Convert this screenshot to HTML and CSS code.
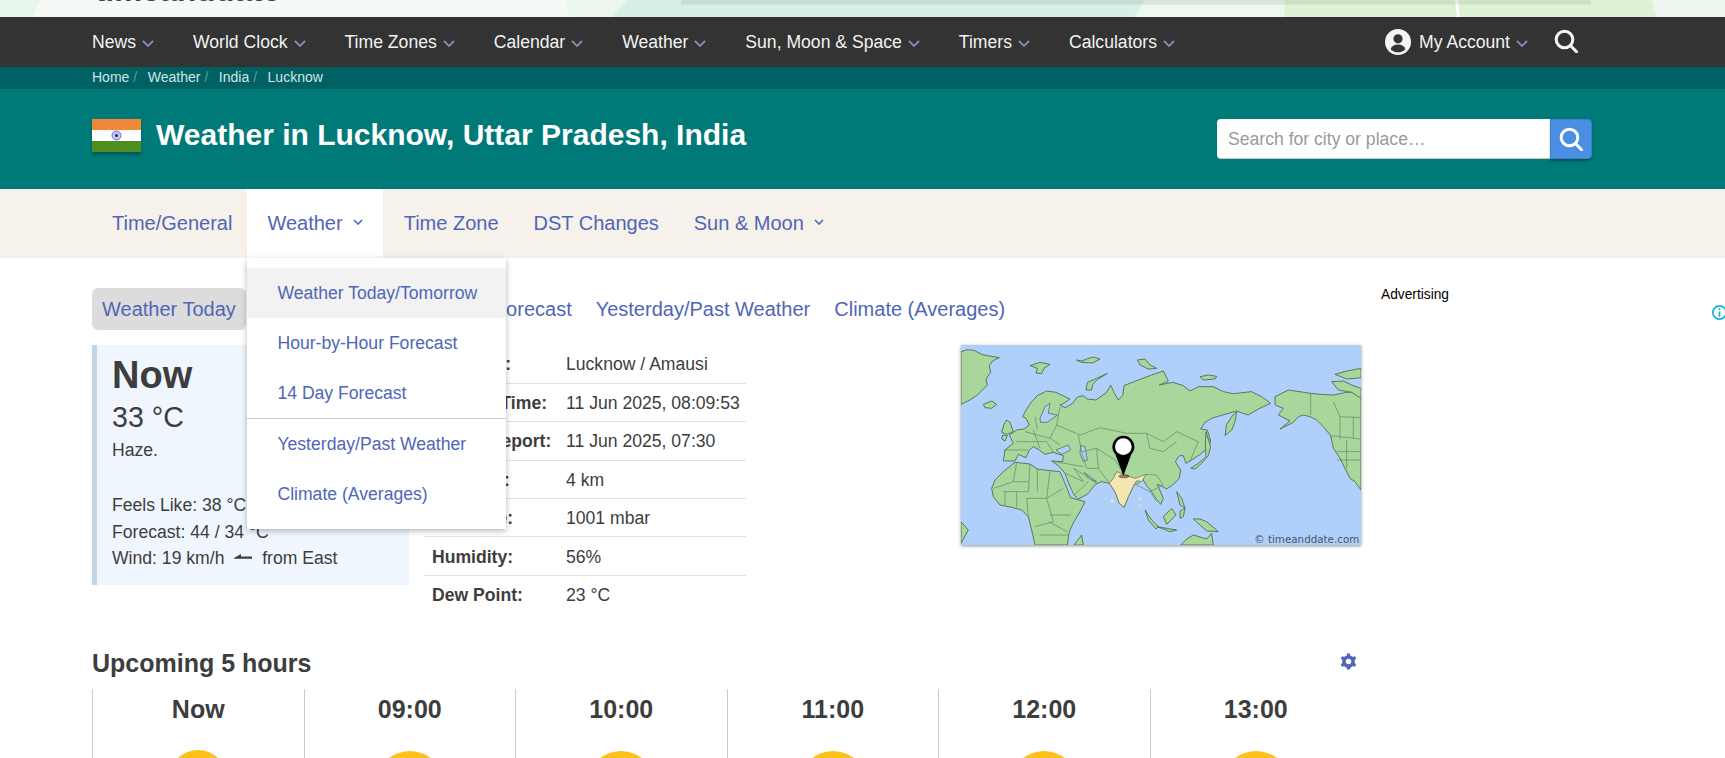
FILE: index.html
```html
<!DOCTYPE html>
<html lang="en">
<head>
  <meta charset="UTF-8" />
  <meta name="viewport" content="width=device-width, initial-scale=1.0" />
  <title>Weather in Lucknow, Uttar Pradesh, India</title>
  <link rel="stylesheet" href="styles.css">
</head>
<body>

<div class="page">

  <div class="brand-strip">
    <svg class="brand-bg" viewBox="0 0 1725 17" preserveAspectRatio="none">
      <rect width="1725" height="17" fill="#f5faf7" />
      <polygon points="0,0 40,0 32,17 0,17" fill="#e8f6ec" />
      <polygon points="566,0 628,0 611,17 570,17" fill="#ecf7ee" />
      <polygon points="628,0 1145,0 1135,17 611,17" fill="#d8efe6" />
      <polygon points="1145,0 1285,0 1284,17 1135,17" fill="#eef8ef" />
      <polygon points="1285,0 1652,0 1657,17 1284,17" fill="#dff2d6" />
      <polygon points="1652,0 1725,0 1725,17 1657,17" fill="#edf7f0" />
      <polygon points="1455,0 1458,0 1460,17 1457,17" fill="#ffffff" />
      <rect x="681" width="910" height="4.5" fill="#000000" fill-opacity="0.08" />
    </svg>
    <div class="brand-logo">timeanddate</div>
  </div>

  <nav class="main-nav">
    <ul class="main-nav-list">
      <li><a href="#" class="main-nav-link">News <svg class="chev" viewBox="0 0 12 7"><polyline points="1,1 6,6 11,1" /></svg></a></li>
      <li><a href="#" class="main-nav-link">World Clock <svg class="chev" viewBox="0 0 12 7"><polyline points="1,1 6,6 11,1" /></svg></a></li>
      <li><a href="#" class="main-nav-link">Time Zones <svg class="chev" viewBox="0 0 12 7"><polyline points="1,1 6,6 11,1" /></svg></a></li>
      <li><a href="#" class="main-nav-link">Calendar <svg class="chev" viewBox="0 0 12 7"><polyline points="1,1 6,6 11,1" /></svg></a></li>
      <li><a href="#" class="main-nav-link">Weather <svg class="chev" viewBox="0 0 12 7"><polyline points="1,1 6,6 11,1" /></svg></a></li>
      <li><a href="#" class="main-nav-link">Sun, Moon &amp; Space <svg class="chev" viewBox="0 0 12 7"><polyline points="1,1 6,6 11,1" /></svg></a></li>
      <li><a href="#" class="main-nav-link">Timers <svg class="chev" viewBox="0 0 12 7"><polyline points="1,1 6,6 11,1" /></svg></a></li>
      <li><a href="#" class="main-nav-link">Calculators <svg class="chev" viewBox="0 0 12 7"><polyline points="1,1 6,6 11,1" /></svg></a></li>
    </ul>
    <div class="main-nav-right">
      <a href="#" class="main-nav-link">
        <svg class="account-icon" viewBox="0 0 26 26">
          <circle cx="13" cy="13" r="13" fill="#f4f4f4" />
          <circle cx="13" cy="9.8" r="4.6" fill="#333" />
          <path d="M5.6 20.2c1-3 3.6-4.6 7.4-4.6s6.4 1.6 7.4 4.6c-1.8 2-4.400 3.100-7.400 3.100s-5.600-1.100-7.400-3.100z" fill="#333" />
        </svg>
        My Account <svg class="chev" viewBox="0 0 12 7"><polyline points="1,1 6,6 11,1" /></svg>
      </a>
      <svg class="nav-search-icon" viewBox="0 0 24 24">
        <circle cx="10.500" cy="10.500" r="8.300" />
        <line x1="16.500" y1="16.500" x2="22.500" y2="22.800" />
      </svg>
    </div>
  </nav>

  <div class="crumbs">
    <a href="#">Home</a><span class="crumb-sep">/</span>
    <a href="#">Weather</a><span class="crumb-sep">/</span>
    <a href="#">India</a><span class="crumb-sep">/</span>
    <a href="#">Lucknow</a>
  </div>

  <header class="city-header">
    <div class="city-title">
      <svg class="flag" viewBox="0 0 49 33">
        <rect width="49" height="11" fill="#f0883a" />
        <rect y="11" width="49" height="11" fill="#ffffff" />
        <rect y="22" width="49" height="11" fill="#4e8f1f" />
        <circle cx="24.500" cy="16.500" r="4.500" fill="#c4c6ea" stroke="#6f74c4" />
        <circle cx="24.500" cy="16.500" r="1.500" fill="#1a2290" />
      </svg>
      <h1>Weather in Lucknow, Uttar Pradesh, India</h1>
    </div>
    <form class="city-search">
      <input class="city-search-input" type="text" placeholder="Search for city or place…" />
      <button class="city-search-btn" type="button">
        <svg viewBox="0 0 24 24">
          <circle cx="10.500" cy="10.500" r="8.300" />
          <line x1="16.500" y1="16.500" x2="22.500" y2="22.800" />
        </svg>
      </button>
    </form>
  </header>

  <nav class="sub-nav">
    <a href="#" class="sub-nav-link">Time/General</a>
    <div class="sub-nav-open">
      <a href="#" class="sub-nav-link">Weather <svg class="chev-small" viewBox="0 0 10 6"><polyline points="1,1 5,5 9,1" /></svg></a>
      <div class="dropdown">
        <a href="#" class="dropdown-item is-current">Weather Today/Tomorrow</a>
        <a href="#" class="dropdown-item">Hour-by-Hour Forecast</a>
        <a href="#" class="dropdown-item">14 Day Forecast</a>
        <div class="dropdown-line"></div>
        <a href="#" class="dropdown-item">Yesterday/Past Weather</a>
        <a href="#" class="dropdown-item">Climate (Averages)</a>
      </div>
    </div>
    <a href="#" class="sub-nav-link">Time Zone</a>
    <a href="#" class="sub-nav-link">DST Changes</a>
    <a href="#" class="sub-nav-link">Sun &amp; Moon <svg class="chev-small" viewBox="0 0 10 6"><polyline points="1,1 5,5 9,1" /></svg></a>
  </nav>

  <div class="layout">
    <main class="content">

      <div class="tabs">
        <a href="#" class="tab is-active">Weather Today</a>
        <a href="#" class="tab">Hourly Forecast</a>
        <a href="#" class="tab">14 Day Forecast</a>
        <a href="#" class="tab">Yesterday/Past Weather</a>
        <a href="#" class="tab">Climate (Averages)</a>
      </div>

      <section class="today">
        <div class="now-card">
          <div class="now-title">Now</div>
          <div class="now-temp">33 °C</div>
          <div class="now-desc">Haze.</div>
          <div class="now-line now-line-first">Feels Like: 38 °C</div>
          <div class="now-line">Forecast: 44 / 34 °C</div>
          <div class="now-line">Wind: 19 km/h
            <svg class="wind-arrow" viewBox="0 0 18 8">
              <path d="M0 5 L7 1 L7 3.600 L18 3.600 L18 5.800 L0 5.800 Z" />
            </svg>
            from East</div>
        </div>

        <table class="station">
          <tr><th>Location:</th><td>Lucknow / Amausi</td></tr>
          <tr><th>Current Time:</th><td>11 Jun 2025, 08:09:53</td></tr>
          <tr><th>Latest Report:</th><td>11 Jun 2025, 07:30</td></tr>
          <tr><th>Visibility:</th><td>4 km</td></tr>
          <tr><th>Pressure:</th><td>1001 mbar</td></tr>
          <tr><th>Humidity:</th><td>56%</td></tr>
          <tr><th>Dew Point:</th><td>23 °C</td></tr>
        </table>

        <svg class="map" viewBox="33 30 1200 600">
          <rect x="33" y="30" width="1200" height="600" fill="#b0d0fc" />
          <g class="map-land">
            <!-- greenland, iceland, arctic islands -->
            <path d="M33 50 L52 44 L72 46 L95 58 L112 62 L148 68 L128 78 L118 92 L122 112 L108 132 L112 150 L98 165 L82 180 L60 195 L33 208 Z" />
            <path d="M100 208 L125 198 L140 208 L125 220 L105 218 Z" />
            <path d="M240 92 L270 82 L300 88 L282 100 L275 116 L258 114 L262 100 Z" />
            <path d="M380 75 L395 78 L410 72 L430 66 L450 72 L428 84 L395 82 Z" />
            <path d="M562 75 L585 72 L600 90 L620 100 L595 102 L570 90 Z" />
            <path d="M408 165 L412 142 L440 130 L472 115 L442 134 L428 148 L425 165 Z" />
            <path d="M750 125 L775 120 L800 124 L795 132 L760 135 Z" />
            <path d="M155 292 L162 268 L170 255 L180 262 L190 290 L170 298 Z" />
            <path d="M158 300 L172 302 L165 318 L155 312 Z" />
            <!-- eurasia -->
            <path d="M218 245 L228 225 L245 200 L262 182 L290 168 L318 172 L360 192 L342 205 L330 210 L345 218 L368 205 L382 186 L400 182 L412 192 L438 195 L470 172 L482 150 L492 172 L505 195 L518 182 L522 152 L565 135 L605 120 L640 108 L655 138 L628 150 L668 142 L700 152 L720 168 L745 155 L790 155 L820 170 L850 176 L905 170 L935 185 L962 205 L925 222 L895 240 L870 232 L860 228 L825 238 L785 250 L765 262 L752 282 L772 285 L782 318 L772 340 L748 360 L720 378 L708 385 L700 362 L688 362 L676 380 L692 405 L688 430 L668 450 L650 462 L632 452 L622 448 L640 490 L632 508 L618 490 L605 470 L590 452 L578 432 L565 445 L552 450 L535 485 L522 517 L508 505 L495 470 L478 445 L455 440 L436 448 L412 478 L385 492 L372 480 L358 450 L345 415 L325 392 L305 378 L338 380 L340 362 L310 352 L285 358 L268 345 L250 335 L238 345 L228 368 L205 358 L195 378 L160 378 L165 345 L190 325 L178 300 L200 285 L222 282 L238 270 L228 250 Z" />
            <!-- africa -->
            <path d="M125 460 L135 435 L160 410 L195 382 L240 387 L262 402 L300 407 L330 410 L345 445 L362 488 L405 500 L390 530 L372 560 L358 590 L352 630 L255 630 L245 585 L235 545 L215 525 L190 518 L150 510 L130 485 Z" />
            <path d="M33 560 L55 585 L33 625 Z" />
            <path d="M372 630 L395 600 L400 630 Z" />
            <!-- japan, kamchatka -->
            <path d="M722 400 L745 385 L768 365 L766 325 L768 290 L782 335 L775 362 L755 385 L735 402 Z" />
            <path d="M825 302 L830 268 L845 245 L860 230 L855 260 L845 285 Z" />
            <!-- islands of south east asia -->
            <path d="M585 525 L605 555 L625 575 L618 582 L595 555 Z" />
            <path d="M640 545 L665 520 L678 540 L650 568 Z" />
            <path d="M622 575 L650 580 L680 585 L660 590 Z" />
            <path d="M680 470 L695 490 L705 520 L690 510 Z" />
            <path d="M690 528 L705 520 L700 545 L690 550 Z" />
            <path d="M730 552 L750 552 L770 560 L805 590 L770 588 Z" />
            <path d="M692 630 L710 612 L730 600 L770 612 L785 595 L790 630 Z" />
            <!-- north america -->
            <path d="M975 185 L1015 165 L1082 175 L1110 178 L1150 180 L1190 172 L1233 170 L1233 465 L1215 440 L1200 430 L1185 400 L1170 370 L1150 340 L1142 302 L1120 275 L1100 255 L1080 245 L1060 240 L1045 245 L1030 262 L990 282 L1020 258 L985 240 L1000 220 L975 210 Z" />
            <path d="M1145 140 L1180 138 L1205 150 L1233 160 L1233 190 L1205 172 L1165 165 Z" />
            <path d="M1155 118 L1190 108 L1233 100 L1233 128 L1190 132 Z" />
          </g>
          <g class="map-seas">
            <path d="M270 250 L285 215 L300 205 L295 235 L322 240 L292 262 L272 262 Z" />
            <path d="M318 345 L355 330 L362 345 L335 358 Z" />
            <path d="M392 332 L405 335 L412 375 L400 380 L390 355 Z" />
            <path d="M402 412 L440 440 L420 432 Z" />
          </g>
          <path class="map-india" d="M478 445 L490 430 L500 410 L525 420 L555 430 L588 418 L575 440 L560 437 L552 450 L535 485 L522 517 L508 505 L495 470 Z" />
          <g class="map-islets">
            <circle cx="487" cy="498" r="5" />
            <circle cx="571" cy="492" r="4" />
            <circle cx="572" cy="512" r="3" />
          </g>
          <g class="map-lines">
            <path d="M320 270 L390 300 L450 278 L530 295 L590 295 L640 320 L680 290 L745 320 L720 378" />
            <path d="M590 295 L600 340 L640 350 L680 320" />
            <path d="M385 300 L395 350 L440 340 L495 375 L510 400" />
            <path d="M440 340 L445 400 L478 445 M395 350 L410 400 L445 400" />
            <path d="M225 290 L300 310 L330 330 M250 285 L270 340 M200 320 L290 320 M160 345 L235 345 M290 320 L310 352 M320 270 L300 310 M255 245 L262 282 M330 215 L320 270" />
            <path d="M560 450 L600 470 L640 450 L620 420 L585 418 M620 500 L600 470" />
            <path d="M1082 175 L1082 240 M1142 302 L1233 312 M1150 200 L1170 245 L1233 248 M1170 245 L1170 312 M1210 245 L1210 312 M1160 350 L1233 350 M1190 315 L1190 400 M1160 375 L1233 375" />
            <path d="M200 382 L190 440 L130 460 M240 387 L235 470 L160 470 M300 407 L290 490 L230 490 L235 545 M340 460 L290 490 L310 560 L255 575 M295 560 L352 590 M262 402 L262 470 M190 440 L235 440 M165 470 L165 510 M200 470 L200 518 M300 540 L362 540 M270 600 L355 600" />
            <path d="M345 415 L400 440 L372 400 L440 445 M305 378 L400 395 M372 480 L415 440" />
          </g>
          <ellipse class="map-shade" cx="522" cy="424" rx="16" ry="6" />
          <path class="map-pin" d="M520 422 L496 358 A33 33 0 1 1 544 358 Z" />
          <circle cx="520" cy="335" r="25" fill="#ffffff" />
          <text class="map-credit" x="1228" y="624" text-anchor="end">© timeanddate.com</text>
        </svg>
      </section>

      <div class="upcoming-head">
        <h2>Upcoming 5 hours</h2>
        <svg class="gear" viewBox="0 0 16 16">
          <circle cx="8" cy="8" r="4.300" />
          <path d="M8 0.400 V3 M8 13 V15.600 M1.400 4.200 L3.700 5.500 M12.300 10.500 L14.600 11.800 M1.400 11.800 L3.700 10.500 M12.300 5.500 L14.600 4.200" />
        </svg>
      </div>

      <div class="hours">
        <div class="hour"><div class="hour-time">Now</div><div class="sun sun-first"></div></div>
        <div class="hour"><div class="hour-time">09:00</div><div class="sun"></div></div>
        <div class="hour"><div class="hour-time">10:00</div><div class="sun"></div></div>
        <div class="hour"><div class="hour-time">11:00</div><div class="sun"></div></div>
        <div class="hour"><div class="hour-time">12:00</div><div class="sun"></div></div>
        <div class="hour"><div class="hour-time">13:00</div><div class="sun"></div></div>
      </div>
    </main>

    <aside class="ad-col">
      <div class="ad-label">Advertising</div>
      <svg class="ad-info" viewBox="0 0 14 14">
        <circle cx="7" cy="7" r="6.200" />
        <path d="M7 6 V11 M7 3 V4.600" />
      </svg>
    </aside>
  </div>

</div>

</body>
</html>
```

FILE: styles.css
```css
:root {
  --link-color: #4f66b8;
  --text-color: #3d3d3d;
}

html, body {
  margin: 0;
  padding: 0;
}

body {
  font-family: "Liberation Sans", Arial, sans-serif;
  font-size: 17.6px;
  color: var(--text-color);
  background-color: #fff;
}

a {
  text-decoration: none;
}

.page {
  height: 100vh;
  overflow: hidden;
}

/* top strip, mostly scrolled away */
.brand-strip {
  position: relative;
  height: 17px;
  overflow: hidden;
}

.brand-bg {
  position: absolute;
  left: 0;
  top: 0;
  width: 100%;
  height: 17px;
}

.brand-logo {
  position: relative;
  margin: -25.5px 0 0 95px;
  font-size: 31.4px;
  line-height: 31px;
  font-weight: bold;
  color: #444;
}

/* main nav */
.main-nav {
  display: flex;
  align-items: center;
  justify-content: space-between;
  height: 50px;
  padding: 0 147px 0 92px;
  background-color: #333;
}

.main-nav-list {
  display: flex;
  gap: 39px;
  list-style: none;
  margin: 0;
  padding: 0;
}

.main-nav-link {
  display: flex;
  align-items: center;
  gap: 6px;
  color: #f2f2f2;
  white-space: nowrap;
}

.chev {
  width: 12px;
  height: 7px;
  fill: none;
  stroke: #7f90b0;
  stroke-width: 1.8;
  margin-top: 2px;
}

.main-nav-right {
  display: flex;
  align-items: center;
  gap: 26px;
}

.account-icon {
  width: 26px;
  height: 26px;
  margin-right: 2px;
}

.nav-search-icon {
  width: 24px;
  height: 24px;
  margin-top: -2px;
  fill: none;
  stroke: #f6f6f6;
  stroke-width: 3;
  stroke-linecap: round;
}

/* breadcrumbs */
.crumbs {
  display: flex;
  align-items: center;
  height: 20px;
  padding: 0 0 2px 92px;
  font-size: 14px;
  background-color: #006164;
}

.crumbs a {
  color: #d3e4e3;
}

.crumb-sep {
  margin: 0 10.5px 0 4px;
  color: #5f9c9c;
}

/* city header */
.city-header {
  display: flex;
  justify-content: space-between;
  height: 100px;
  box-sizing: border-box;
  padding: 30px 133px 0 92px;
  background-color: #007a78;
}

.city-title {
  display: flex;
  gap: 15px;
}

.flag {
  width: 49px;
  height: 33px;
  box-shadow: 0 3px 3px rgba(0, 0, 0, 0.25);
}

.city-title h1 {
  margin: 0;
  font-size: 30px;
  height: 33px;
  line-height: 31px;
  color: #fff;
}

.city-search {
  display: flex;
  height: 40px;
  margin: 0;
}

.city-search-input {
  width: 333px;
  box-sizing: border-box;
  padding: 2px 11px 0;
  font-family: inherit;
  font-size: 17.6px;
  color: #333;
  background-color: #fff;
  border: 0;
  border-bottom: 1px solid #ccc;
  border-radius: 4px 0 0 4px;
  outline: none;
}

.city-search-input::placeholder {
  color: #9a9a9a;
}

.city-search-btn {
  display: flex;
  align-items: center;
  justify-content: center;
  width: 42px;
  padding: 0;
  background-color: #4a8fe3;
  border: 1px solid #3f7fcc;
  border-radius: 0 4px 4px 0;
  box-shadow: 0 2px 2px rgba(0, 0, 0, 0.3);
}

.city-search-btn svg {
  width: 24px;
  height: 24px;
  fill: none;
  stroke: #fff;
  stroke-width: 3;
  stroke-linecap: round;
}

/* sub nav */
.sub-nav {
  display: flex;
  height: 69px;
  padding-left: 94.500px;
  font-size: 20px;
  background-color: #f6f1ea;
}

.sub-nav-link {
  display: flex;
  align-items: center;
  gap: 10px;
  padding: 0 17.5px;
  color: var(--link-color);
  white-space: nowrap;
}

.chev-small {
  width: 10px;
  height: 6px;
  fill: none;
  stroke: var(--link-color);
  stroke-width: 1.6;
  margin-top: -4px;
}

.sub-nav-open {
  position: relative;
  display: flex;
  margin: 0 3.5px 0 -2.5px;
  background-color: #fff;
}

.sub-nav-open > .sub-nav-link {
  padding: 0 20px;
}

.dropdown {
  position: absolute;
  left: 0;
  top: 69px;
  z-index: 5;
  width: 259px;
  padding: 10px 0;
  font-size: 17.6px;
  background-color: #fff;
  box-shadow: 0 2px 6px rgba(0, 0, 0, 0.28);
}

.dropdown-item {
  display: block;
  height: 50px;
  padding-left: 30px;
  line-height: 50px;
  color: var(--link-color);
}

.dropdown-item.is-current {
  background-color: #f2f2f2;
}

.dropdown-line {
  height: 1px;
  background-color: #ccc;
}

/* page columns */
.layout {
  display: flex;
  padding: 30px 0 0 92px;
}

.content {
  width: 1269px;
  flex-shrink: 0;
}

.tabs {
  display: flex;
  gap: 4px;
  height: 42px;
  margin-bottom: 15px;
  font-size: 20px;
}

.tab {
  padding: 0 10px;
  line-height: 42px;
  color: var(--link-color);
  white-space: nowrap;
  border-radius: 6px;
}

.tab.is-active {
  background-color: #dcdcdc;
}

.today {
  display: flex;
  align-items: flex-start;
}

.now-card {
  width: 317px;
  height: 240px;
  box-sizing: border-box;
  padding: 10px 0 0 15px;
  background-color: #eff6fe;
  border-left: 5px solid #c1d5e4;
}

.now-title {
  font-size: 38px;
  line-height: 40px;
  font-weight: bold;
}

.now-temp {
  margin-top: 2px;
  font-size: 28.6px;
  line-height: 40px;
}

.now-desc {
  line-height: 26px;
  margin-bottom: 29px;
}

.now-line {
  line-height: 26.5px;
  white-space: nowrap;
}

.wind-arrow {
  width: 18px;
  height: 8px;
  margin: 0 5px 3px 5px;
  fill: #3d3d3d;
}

.station {
  width: 322px;
  margin-left: 15px;
  border-collapse: collapse;
}

.station tr {
  height: 38.4px;
  border-bottom: 1px solid #e2e2e2;
}

.station tr:last-child {
  border-bottom: 0;
}

.station th {
  width: 142px;
  box-sizing: border-box;
  padding: 2px 0 0 8px;
  text-align: left;
  white-space: nowrap;
}

.station td {
  padding: 2px 0 0;
  white-space: nowrap;
}

.map {
  display: block;
  width: 400px;
  height: 200px;
  margin-left: auto;
  box-shadow: 0 1px 3px rgba(0, 0, 0, 0.45);
}

.map-land {
  fill: #a9d69a;
  stroke: #4c6a4d;
  stroke-width: 2.6;
  stroke-linejoin: round;
  filter: blur(0.3px);
}

.map-seas {
  fill: #b0d0fc;
  stroke: #4c6a4d;
  stroke-width: 2.2;
  filter: blur(0.3px);
}

.map-india {
  fill: #f5e6b0;
  stroke: #5a6a4d;
  stroke-width: 2;
  filter: blur(0.3px);
}

.map-islets {
  fill: #f5e6b0;
}

.map-lines {
  fill: none;
  stroke: #5f8660;
  stroke-width: 2;
  filter: blur(0.3px);
}

.map-shade {
  fill: rgba(60, 40, 20, 0.55);
}

.map-pin {
  fill: #000;
}

.map-credit {
  font-family: "DejaVu Sans", sans-serif;
  font-size: 31px;
  fill: #4a5563;
}

/* hours */
.upcoming-head {
  display: flex;
  align-items: center;
  justify-content: space-between;
  height: 30px;
  margin-top: 34px;
  padding-right: 4px;
}

.upcoming-head h2 {
  margin: 0;
  font-size: 25px;
  line-height: 30px;
}

.gear {
  width: 17px;
  height: 17px;
  margin-top: -3px;
  fill: none;
  stroke: var(--link-color);
}

.gear circle {
  stroke-width: 3.4;
}

.gear path {
  stroke-width: 3;
}

.hours {
  display: grid;
  grid-template-columns: repeat(6, 1fr);
  margin-top: 11px;
}

.hour {
  height: 150px;
  border-left: 1px solid #ccc;
  text-align: center;
}

.hour-time {
  padding-top: 5px;
  font-size: 25px;
  line-height: 30px;
  font-weight: bold;
}

.sun {
  width: 70px;
  height: 70px;
  margin: 27px auto 0;
  background-color: #fec118;
  border-radius: 50%;
}

.sun-first {
  width: 58px;
  height: 58px;
  margin-top: 26px;
}

/* ad column */
.ad-col {
  position: relative;
  flex: 1;
  min-width: 0;
  padding: 1px 0 0 20px;
}

.ad-label {
  font-size: 13.75px;
  line-height: 12px;
  color: #000;
}

.ad-info {
  position: absolute;
  left: 351px;
  top: 17px;
  width: 15px;
  height: 15px;
  fill: none;
  stroke: #12b5d6;
  stroke-width: 1.6;
}
```
